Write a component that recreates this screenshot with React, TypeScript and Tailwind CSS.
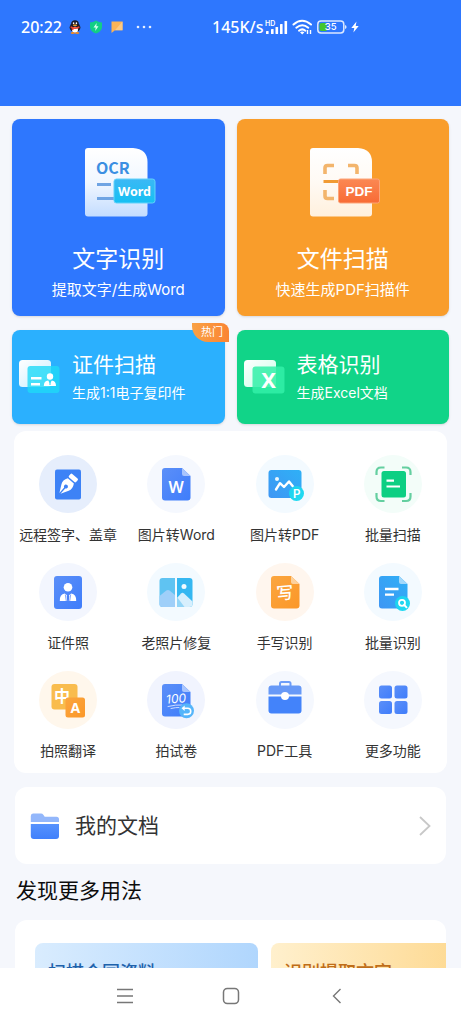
import React from "react";

const ICON_FONT = "Inter, 'Noto Sans CJK SC', sans-serif";

function QqIcon() {
  return (
    <svg width="12" height="14" viewBox="0 0 12 14" aria-hidden="true">
      <ellipse cx="6" cy="7.5" rx="5.4" ry="4.6" fill="#1b1c28" />
      <ellipse cx="6" cy="4.4" rx="3.9" ry="4.2" fill="#1b1c28" />
      <ellipse cx="6" cy="9.8" rx="3" ry="3" fill="#fff" />
      <ellipse cx="4.6" cy="3.2" rx=".8" ry="1" fill="#fff" />
      <ellipse cx="7.4" cy="3.2" rx=".8" ry="1" fill="#fff" />
      <ellipse cx="6" cy="5.2" rx="2.2" ry=".8" fill="#f5a623" />
      <path d="M1.800 6.200q4.200 2 8.400 0l.3 1.700q-4.500 2-9 0z" fill="#e8432e" />
      <path d="M2.800 7.600h1.700v2.500H2.800z" fill="#e8432e" />
      <ellipse cx="3.800" cy="13" rx="2.200" ry=".9" fill="#f08a24" />
      <ellipse cx="8.200" cy="13" rx="2.200" ry=".9" fill="#f08a24" />
    </svg>
  );
}

function ShieldIcon() {
  return (
    <svg width="14" height="14" viewBox="0 0 14 14" aria-hidden="true">
      <path d="M7 .4c2 1.300 3.800 1.800 6 2v4.300c0 3.400-2.600 5.600-6 6.900-3.400-1.300-6-3.500-6-6.900V2.400c2.200-.2 4-.7 6-2z" fill="#12cf86" />
      <path d="M7.700 3 4.500 7.600h2.200L6.200 11l3.300-4.700H7.300z" fill="#d8fff0" />
    </svg>
  );
}

function MessageIcon() {
  return (
    <svg width="12" height="12" viewBox="0 0 12 12" aria-hidden="true">
      <path d="M.5.500h11v8.800H4L.5 12z" fill="#fbb457" />
      <path d="M11.500.500v8.800H4z" fill="#fdca83" />
    </svg>
  );
}

function SignalIcon() {
  return (
    <svg width="23" height="16" viewBox="0 0 23 16" aria-hidden="true">
      <text x="0" y="6.500" fontSize="7" fontWeight="600" fill="#fff" style={{ fontFamily: ICON_FONT }}>HD</text>
      <g fill="#fff">
        <rect x="1" y="12" width="2.600" height="3" rx=".6" />
        <rect x="6" y="10" width="2.600" height="5" rx=".6" />
        <rect x="10.500" y="8" width="2.600" height="7" rx=".6" />
        <rect x="15" y="5" width="2.600" height="10" rx=".6" />
        <rect x="19.500" y="2" width="2.600" height="13" rx=".6" />
      </g>
    </svg>
  );
}

function WifiIcon() {
  return (
    <svg width="21" height="16" viewBox="0 0 21 16" aria-hidden="true">
      <g fill="none" stroke="#fff" strokeWidth="2" strokeLinecap="round">
        <path d="M1.500 5.500q8.500-7.500 17.500 0" />
        <path d="M4.300 8.700q6-5 12 0" />
        <path d="M7 11.700q3.300-2.600 6.400 0" />
      </g>
      <path d="M8 13.200q2.200-1.400 4.400 0L10.200 15.500z" fill="#fff" />
      <path d="M15.500 11v4M18.500 15v-4" fill="none" stroke="#fff" strokeWidth="1.400" />
    </svg>
  );
}

function BatteryIcon() {
  return (
    <svg width="30" height="14" viewBox="0 0 30 14" aria-hidden="true">
      <rect x=".8" y="1" width="26" height="12" rx="3.200" fill="none" stroke="#dbe8ff" strokeWidth="1.500" />
      <path d="M4.500 3h5v8h-5a2 2 0 0 1-2-2V5a2 2 0 0 1 2-2z" fill="#43c52f" />
      <path d="M28 5q1.600.3 1.600 2T28 9z" fill="#dbe8ff" />
      <text x="13.700" y="10.400" textAnchor="middle" fontSize="9.500" fontWeight="500" fill="#fff" style={{ fontFamily: ICON_FONT }}>35</text>
    </svg>
  );
}

function BoltIcon() {
  return (
    <svg width="8" height="12" viewBox="0 0 8 12" aria-hidden="true">
      <path d="M5.500.500.300 6.900h3L2.400 11.500 7.700 5h-3z" fill="#fff" />
    </svg>
  );
}

function OcrIcon() {
  return (
    <svg width="76" height="70" viewBox="0 0 76 70" aria-hidden="true">
      <defs>
        <linearGradient id="ocrPage" x1="0" y1="0" x2="0" y2="1">
          <stop offset="0" stopColor="#fff" />
          <stop offset=".5" stopColor="#f1f7ff" />
          <stop offset="1" stopColor="#c3dcff" />
        </linearGradient>
        <linearGradient id="ocrTag" x1="0" y1="0" x2="0" y2="1">
          <stop offset="0" stopColor="#3bb8f5" />
          <stop offset="1" stopColor="#16c0f3" />
        </linearGradient>
      </defs>
      <path d="M8 0h45q14.500 1 14.500 14v51.500a3 3 0 0 1-3 3H8a3 3 0 0 1-3-3V3a3 3 0 0 1 3-3z" fill="url(#ocrPage)" />
      <text x="16" y="26" fontSize="16" fontWeight="700" fill="#3b8fe2" style={{ fontFamily: "'Noto Sans CJK SC', sans-serif" }}>OCR</text>
      <path d="M17 36.500h14M17 50.500h17" stroke="#6fa4e3" strokeWidth="3" />
      <rect x="34" y="31" width="41" height="24" rx="2.500" fill="url(#ocrTag)" stroke="#63d2fa" strokeWidth="1" />
      <text x="54.500" y="47.500" textAnchor="middle" fontSize="12.500" fontWeight="700" fill="#fff" style={{ fontFamily: "'Noto Sans', sans-serif" }}>Word</text>
    </svg>
  );
}

function ScanPdfIcon() {
  return (
    <svg width="76" height="70" viewBox="0 0 76 70" aria-hidden="true">
      <defs>
        <linearGradient id="pdfPage" x1="0" y1="0" x2="0" y2="1">
          <stop offset="0" stopColor="#fff" />
          <stop offset=".5" stopColor="#fffaf4" />
          <stop offset="1" stopColor="#fff0dd" />
        </linearGradient>
        <linearGradient id="pdfTag" x1="0" y1="0" x2="0" y2="1">
          <stop offset="0" stopColor="#fb8853" />
          <stop offset="1" stopColor="#f86b35" />
        </linearGradient>
      </defs>
      <path d="M8 0h45q14 1 14 14v51.500a3 3 0 0 1-3 3H8a3 3 0 0 1-3-3V3a3 3 0 0 1 3-3z" fill="url(#pdfPage)" />
      <g fill="none" stroke="#f3b56c" strokeWidth="3.600">
        <path d="M20 26v-6q0-2.500 2.500-2.500H29M43 17.500h6.500q2.500 0 2.500 2.500v6M20 42v6q0 2.500 2.500 2.500H29" />
      </g>
      <path d="M18.500 33.500H36" stroke="#f19b33" strokeWidth="3" />
      <rect x="33.500" y="31" width="41" height="24" rx="2" fill="url(#pdfTag)" stroke="#fda578" strokeWidth="1" />
      <text x="54" y="47.500" textAnchor="middle" fontSize="13.500" fontWeight="700" fill="#fff" style={{ fontFamily: "'Liberation Sans', sans-serif" }}>PDF</text>
    </svg>
  );
}

function IdCardIcon() {
  return (
    <svg width="42" height="34" viewBox="0 0 42 34" aria-hidden="true">
      <defs>
        <linearGradient id="idBack" x1="0" y1="0" x2="1" y2="1">
          <stop offset="0" stopColor="#fff" />
          <stop offset="1" stopColor="#c6edff" />
        </linearGradient>
      </defs>
      <rect x="0" y="0" width="32" height="27" rx="3.500" fill="url(#idBack)" />
      <rect x="8.500" y="6" width="32" height="27" rx="3" fill="#1fd9f7" fillOpacity=".8" />
      <path d="M12 18.300h10.500M12 24.300h9" stroke="#fff" strokeWidth="2.400" />
      <circle cx="31" cy="16.500" r="3.200" fill="#fff" />
      <path d="M24.800 26q0-5 4.400-5.400L31 23.400l1.800-2.800q4.200.4 4.200 5.400z" fill="#fff" />
      <path d="M31 21v4" stroke="#1fd9f7" strokeWidth="1" />
    </svg>
  );
}

function ExcelIcon() {
  return (
    <svg width="42" height="34" viewBox="0 0 42 34" aria-hidden="true">
      <defs>
        <linearGradient id="xlBack" x1="0" y1="0" x2="1" y2="1">
          <stop offset="0" stopColor="#fff" />
          <stop offset="1" stopColor="#c6ffe6" />
        </linearGradient>
      </defs>
      <rect x="0" y="0" width="32" height="27" rx="3.500" fill="url(#xlBack)" />
      <rect x="8.500" y="6.500" width="32" height="27" rx="3" fill="#32f0a8" fillOpacity=".85" />
      <text x="24.500" y="27.500" textAnchor="middle" fontSize="22" fontWeight="700" fill="#fff" style={{ fontFamily: "'Noto Sans', sans-serif" }}>X</text>
    </svg>
  );
}

function Gradients() {
  return (
    <svg width="0" height="0" className="absolute" aria-hidden="true">
      <defs>
        <linearGradient id="gBlue" x1="0" y1="0" x2="1" y2="1">
          <stop offset="0" stopColor="#5b8ff8" />
          <stop offset="1" stopColor="#3f7dfb" />
        </linearGradient>
        <linearGradient id="gSky" x1="1" y1="0" x2="0" y2="1">
          <stop offset="0" stopColor="#2fb0f6" />
          <stop offset="1" stopColor="#3e96f4" />
        </linearGradient>
        <linearGradient id="gCyan" x1="0" y1="0" x2="1" y2="1">
          <stop offset="0" stopColor="#1bd0ee" />
          <stop offset="1" stopColor="#22dcf2" />
        </linearGradient>
        <linearGradient id="gOrange" x1="0" y1="0" x2="1" y2="1">
          <stop offset="0" stopColor="#fba63f" />
          <stop offset="1" stopColor="#fb9728" />
        </linearGradient>
        <linearGradient id="gFolder" x1="0" y1="0" x2="0" y2="1">
          <stop offset="0" stopColor="#5692fd" />
          <stop offset="1" stopColor="#4080fb" />
        </linearGradient>
      </defs>
    </svg>
  );
}

function Art({ children }: { children: React.ReactNode }) {
  return (
    <svg width="58" height="58" viewBox="0 0 58 58" aria-hidden="true">
      {children}
    </svg>
  );
}

const signArt = (
  <Art>
    <rect x="16" y="14.500" width="26" height="30" rx="2" fill="#3d82f6" />
    <g transform="translate(28.700 29.500) rotate(41)" fill="#fff">
      <rect x="-4.700" y="-11" width="9.400" height="4.800" rx="1.200" />
      <path d="M-4-4.800h8q3 4.800.8 8.800L.7 11.800V4.600a2 2 0 1 0-1.400 0v7.200L-4.800 4q-2.200-4 .8-8.800z" />
    </g>
  </Art>
);

const wordArt = (
  <Art>
    <path d="M18 13h17l8.500 8v21.500a3 3 0 0 1-3 3H18a3 3 0 0 1-3-3V16a3 3 0 0 1 3-3z" fill="url(#gBlue)" />
    <path d="M35 13l8.500 8H37a2 2 0 0 1-2-2z" fill="#a9c5fd" />
    <text x="29.200" y="37.500" textAnchor="middle" fontSize="16" fontWeight="600" fill="#fff" style={{ fontFamily: "'Noto Sans', sans-serif" }}>W</text>
  </Art>
);

const imagePdfArt = (
  <Art>
    <rect x="12.500" y="15" width="33" height="28" rx="3" fill="url(#gSky)" />
    <circle cx="21" cy="24" r="2" fill="#e8f6ff" />
    <path d="M20 34.500l4-6.300 4 3.800 5-5.500 4 5" fill="none" stroke="#fff" strokeWidth="2.400" strokeLinecap="round" strokeLinejoin="round" />
    <circle cx="40.500" cy="38.500" r="7.500" fill="url(#gCyan)" />
    <text x="40.800" y="42.700" textAnchor="middle" fontSize="11.500" fontWeight="600" fill="#fff" style={{ fontFamily: ICON_FONT }}>P</text>
  </Art>
);

const batchScanArt = (
  <Art>
    <path d="M12.500 20v-3q0-4.500 4.500-4.500h3.500M38 12.500h4q4.500 0 4.500 4.500v3M12.500 38v3.500q0 4.500 4.500 4.500h3.500M38 46h4q4.500 0 4.500-4.500V38" fill="none" stroke="#64cfa0" strokeWidth="2.200" />
    <rect x="17.500" y="16" width="24.500" height="26.500" rx="2.500" fill="#0dcf83" />
    <path d="M22.500 25.700h7.500M22.500 31.500h13.500" stroke="#fff" strokeWidth="2.200" />
  </Art>
);

const idPhotoArt = (
  <Art>
    <rect x="15" y="13" width="28" height="33" rx="3" fill="url(#gBlue)" />
    <circle cx="29" cy="24.300" r="4.300" fill="#fff" />
    <path d="M20.800 38q-.3-6.500 5-7.400L29 33l3.200-2.400q5.300.9 5 7.400z" fill="#fff" />
    <path d="M29 31.500l1.300 1.300-.5 5.200h-1.600l-.5-5.200z" fill="#477ff9" />
    <path d="M26.300 31.500l1 6.500M31.700 31.500l-1 6.500" stroke="#477ff9" strokeWidth=".7" />
  </Art>
);

const photoRepairArt = (
  <Art>
    <path d="M15.500 15H28v29H15.500a3 3 0 0 1-3-3V18a3 3 0 0 1 3-3z" fill="#5fc3f2" />
    <path d="M30 15h12.500a3 3 0 0 1 3 3v23a3 3 0 0 1-3 3H30z" fill="#35b7f1" />
    <path d="M12.500 33l6.800-5.500q1.700-1 3.200 0L28 32v12H15.500a3 3 0 0 1-3-3z" fill="#9fcff9" />
    <path d="M30 35l4-4.500q1.500-1.300 3 0l8.500 8v2.500a3 3 0 0 1-3 3H30z" fill="#d7effd" />
    <path d="M30 34l7.500 10H30z" fill="#93d5f7" />
    <circle cx="37" cy="23.500" r="2.500" fill="#f0faff" />
  </Art>
);

const handwritingArt = (
  <Art>
    <path d="M18 13h17l8.500 8v21.500a3 3 0 0 1-3 3H18a3 3 0 0 1-3-3V16a3 3 0 0 1 3-3z" fill="url(#gOrange)" />
    <path d="M35 13l8.500 8H37a2 2 0 0 1-2-2z" fill="#fdd19c" />
    <text x="29" y="36" textAnchor="middle" fontSize="17" fontWeight="500" fill="#fff" transform="rotate(-5 29 30)" style={{ fontFamily: "'Noto Sans CJK SC', sans-serif" }}>写</text>
  </Art>
);

const batchOcrArt = (
  <Art>
    <path d="M18 13h17l8.500 8v21.500a3 3 0 0 1-3 3H18a3 3 0 0 1-3-3V16a3 3 0 0 1 3-3z" fill="url(#gSky)" />
    <path d="M35 13l8.500 8H37a2 2 0 0 1-2-2z" fill="#a3d8fb" />
    <path d="M21 26h13.500M21 31.600h9" stroke="#fff" strokeWidth="2.300" />
    <circle cx="38.500" cy="40.500" r="7.500" fill="url(#gCyan)" />
    <circle cx="38" cy="39.800" r="3" fill="none" stroke="#fff" strokeWidth="1.800" />
    <path d="M40.200 42l2.300 2.300" stroke="#fff" strokeWidth="1.900" strokeLinecap="round" />
  </Art>
);

const translateArt = (
  <Art>
    <rect x="12.500" y="13" width="26" height="25.500" rx="3" fill="#f9bc4d" />
    <text x="23" y="31" textAnchor="middle" fontSize="16" fontWeight="700" fill="#fff" style={{ fontFamily: "'Noto Sans CJK SC', sans-serif" }}>中</text>
    <rect x="26.500" y="26.500" width="19.500" height="20" rx="2.500" fill="url(#gOrange)" />
    <text x="36.400" y="41.500" textAnchor="middle" fontSize="14" fontWeight="700" fill="#fff" style={{ fontFamily: "'Noto Sans', sans-serif" }}>A</text>
  </Art>
);

const examArt = (
  <Art>
    <path d="M18 13h17l8.500 8v21.500a3 3 0 0 1-3 3H18a3 3 0 0 1-3-3V16a3 3 0 0 1 3-3z" fill="url(#gBlue)" />
    <path d="M35 13l8.500 8H37a2 2 0 0 1-2-2z" fill="#a9c5fd" />
    <text x="29" y="32" textAnchor="middle" fontSize="12" fontWeight="400" fontStyle="italic" fill="#fff" transform="rotate(-4 29 28)" style={{ fontFamily: ICON_FONT }}>100</text>
    <path d="M21 35.500q8-2 14-1.500M24 37.500q5-1.200 8-1" fill="none" stroke="#dbe7ff" strokeWidth=".9" strokeLinecap="round" />
    <circle cx="39.500" cy="39.800" r="7.500" fill="#55b5fa" />
    <path d="M36.500 37.300h4.200a2.900 2.900 0 1 1 0 6.100h-4" fill="none" stroke="#fff" strokeWidth="1.600" />
    <path d="M37.700 34.600v5.400l-3.200-2.700z" fill="#fff" />
  </Art>
);

const toolboxArt = (
  <Art>
    <path d="M24 15v-2.500q0-1.500 1.500-1.500h7.500q1.500 0 1.500 1.500V15" fill="none" stroke="#6e9ef8" strokeWidth="2" />
    <path d="M15.500 14.500h27a3 3 0 0 1 3 3v6h-33v-6a3 3 0 0 1 3-3z" fill="#6799f7" />
    <path d="M12.500 25.500h33v14a3 3 0 0 1-3 3h-27a3 3 0 0 1-3-3z" fill="#4383fa" />
    <circle cx="29" cy="25" r="4" fill="#fff" />
  </Art>
);

const moreArt = (
  <Art>
    <g fill="url(#gBlue)">
      <rect x="15" y="14.500" width="13" height="13" rx="2.500" />
      <rect x="30.500" y="14.500" width="13" height="13" rx="2.500" />
      <rect x="15" y="30" width="13" height="13" rx="2.500" />
      <rect x="30.500" y="30" width="13" height="13" rx="2.500" />
    </g>
  </Art>
);

const tools = [
  { label: "远程签字、盖章", art: signArt, tint: "bg-[#e6eefc]" },
  { label: "图片转Word", art: wordArt, tint: "bg-[#f5f8fe]" },
  { label: "图片转PDF", art: imagePdfArt, tint: "bg-[#f3faff]" },
  { label: "批量扫描", art: batchScanArt, tint: "bg-[#f3fdf9]" },
  { label: "证件照", art: idPhotoArt, tint: "bg-[#f3f6fe]" },
  { label: "老照片修复", art: photoRepairArt, tint: "bg-[#f3faff]" },
  { label: "手写识别", art: handwritingArt, tint: "bg-[#fff6ee]" },
  { label: "批量识别", art: batchOcrArt, tint: "bg-[#f3faff]" },
  { label: "拍照翻译", art: translateArt, tint: "bg-[#fff7ec]" },
  { label: "拍试卷", art: examArt, tint: "bg-[#f1f4fe]" },
  { label: "PDF工具", art: toolboxArt, tint: "bg-[#f5f8fe]" },
  { label: "更多功能", art: moreArt, tint: "bg-[#f5f8fe]" },
];

function StatusBar() {
  return (
    <header className="h-[106px] shrink-0 bg-[#2e77fe] text-white">
      <div className="flex h-[54px] items-center pl-[21px] font-['Noto_Sans',sans-serif] text-[16px] leading-5 font-medium">
        <div className="flex w-[191px] items-center">
          <span className="w-12">20:22</span>
          <span className="flex items-center gap-2">
            <QqIcon />
            <ShieldIcon />
            <MessageIcon />
          </span>
          <svg width="18" height="4" viewBox="0 0 18 4" className="ml-3" aria-hidden="true">
            <g fill="#e6efff">
              <circle cx="3" cy="2" r="1.300" />
              <circle cx="9" cy="2" r="1.300" />
              <circle cx="15" cy="2" r="1.300" />
            </g>
          </svg>
        </div>
        <span className="w-[53px]">145K/s</span>
        <span className="flex items-center gap-1">
          <SignalIcon />
          <WifiIcon />
          <BatteryIcon />
          <BoltIcon />
        </span>
      </div>
    </header>
  );
}

function BigCard({ color, icon, title, sub }: { color: string; icon: React.ReactNode; title: string; sub: string }) {
  return (
    <button type="button" className={`flex flex-col items-center rounded-lg pt-[29px] pb-[15px] text-white shadow-sm ${color}`}>
      {icon}
      <span className="mt-[26px] text-[23px] leading-[30px]">{title}</span>
      <span className="mt-[5px] text-[15px] leading-[22px]">{sub}</span>
    </button>
  );
}

function SmallCard({ color, icon, title, sub, tag }: { color: string; icon: React.ReactNode; title: string; sub: string; tag?: string }) {
  return (
    <button type="button" className={`relative flex h-[94px] items-center gap-[11px] rounded-lg pl-[7px] text-left text-white shadow-sm ${color}`}>
      {icon}
      <span className="flex flex-col gap-1">
        <span className="text-[21px] leading-7">{title}</span>
        <span className="text-[14px] leading-5">{sub}</span>
      </span>
      {tag && (
        <span className="absolute -top-[7px] -right-1 h-[19px] w-[37px] rounded-tr-lg rounded-bl-2xl bg-linear-to-r from-[#f9a145] to-[#fa8433] pl-1 text-center text-[11px] leading-[18px]">
          {tag}
        </span>
      )}
    </button>
  );
}

export default function App() {
  return (
    <div className="flex h-screen flex-col overflow-hidden bg-[#f5f7fc] font-[Inter,'Noto_Sans_CJK_SC',sans-serif] text-[#333]">
      <Gradients />
      <StatusBar />
      <main className="min-h-0 flex-1 overflow-hidden">
        <section className="grid grid-cols-2 gap-x-3 gap-y-[14px] px-3 pt-[13px]">
          <BigCard color="bg-[#2e77fe]" icon={<OcrIcon />} title="文字识别" sub="提取文字/生成Word" />
          <BigCard color="bg-[#f99d2b]" icon={<ScanPdfIcon />} title="文件扫描" sub="快速生成PDF扫描件" />
          <SmallCard color="bg-[#2bb0fe]" icon={<IdCardIcon />} title="证件扫描" sub="生成1:1电子复印件" tag="热门" />
          <SmallCard color="bg-[#11d488]" icon={<ExcelIcon />} title="表格识别" sub="生成Excel文档" />
        </section>

        <section className="mx-[14px] mt-[7px] grid grid-cols-4 gap-y-[18px] rounded-xl bg-white pt-6 pb-3">
          {tools.map((t) => (
            <button key={t.label} type="button" className="flex flex-col items-center gap-3 text-[14px] leading-5 whitespace-nowrap">
              <span className={`rounded-full ${t.tint}`}>{t.art}</span>
              <span>{t.label}</span>
            </button>
          ))}
        </section>

        <a href="#documents" className="mx-[15px] mt-[14px] flex h-[77px] items-center rounded-xl bg-white px-[15px]">
          <svg width="30" height="28" viewBox="0 0 30 28" aria-hidden="true">
            <path d="M3 1.500h8q1.500 0 2.300 1.200l1.400 2.100h11.800a2.500 2.500 0 0 1 2.500 2.500V10H.8V4a2.500 2.500 0 0 1 2.200-2.500z" fill="#93b7fb" />
            <path d="M.8 12H29v12a3 3 0 0 1-3 3H3.800a3 3 0 0 1-3-3z" fill="url(#gFolder)" />
          </svg>
          <span className="ml-[15px] flex-1 text-[21px] leading-7">我的文档</span>
          <svg width="12" height="20" viewBox="0 0 12 20" fill="none" stroke="#c8c8c8" strokeWidth="1.800" aria-hidden="true">
            <path d="M1 1l9.500 9L1 19" />
          </svg>
        </a>

        <h2 className="mx-4 mt-[11px] text-[21px] leading-8 text-[#0c0c0c]">发现更多用法</h2>

        <section className="mx-[15px] mt-[13px] flex gap-[13px] overflow-hidden rounded-xl bg-white pt-[23px] pb-6 pl-5">
          <a href="#contract" className="h-28 w-[223px] shrink-0 rounded-lg bg-linear-to-r from-[#d9ecfe] to-[#b0d6fd] px-[13px] pt-4 text-[18px] leading-7 font-medium text-[#1f62ab]">
            扫描合同资料
          </a>
          <a href="#extract" className="h-28 w-[223px] shrink-0 rounded-lg bg-linear-to-r from-[#fff0cd] to-[#fdd586] px-[13px] pt-4 text-[18px] leading-7 font-medium text-[#bf6d18]">
            识别提取文字
          </a>
        </section>
      </main>

      <nav className="flex h-14 shrink-0 items-center justify-center gap-[82px] bg-white">
        <button type="button" aria-label="菜单">
          <svg width="24" height="24" viewBox="0 0 24 24" fill="none" stroke="#777" strokeWidth="1.400" aria-hidden="true">
            <path d="M4 5.500h16M4 12h16M4 18.500h16" />
          </svg>
        </button>
        <button type="button" aria-label="主页">
          <svg width="24" height="24" viewBox="0 0 24 24" fill="none" stroke="#777" strokeWidth="1.500" aria-hidden="true">
            <rect x="4.500" y="4.500" width="15" height="15" rx="3.800" />
          </svg>
        </button>
        <button type="button" aria-label="返回">
          <svg width="24" height="24" viewBox="0 0 24 24" fill="none" stroke="#777" strokeWidth="1.400" aria-hidden="true">
            <path d="M15.500 5l-7 7 7 7" />
          </svg>
        </button>
      </nav>
    </div>
  );
}
